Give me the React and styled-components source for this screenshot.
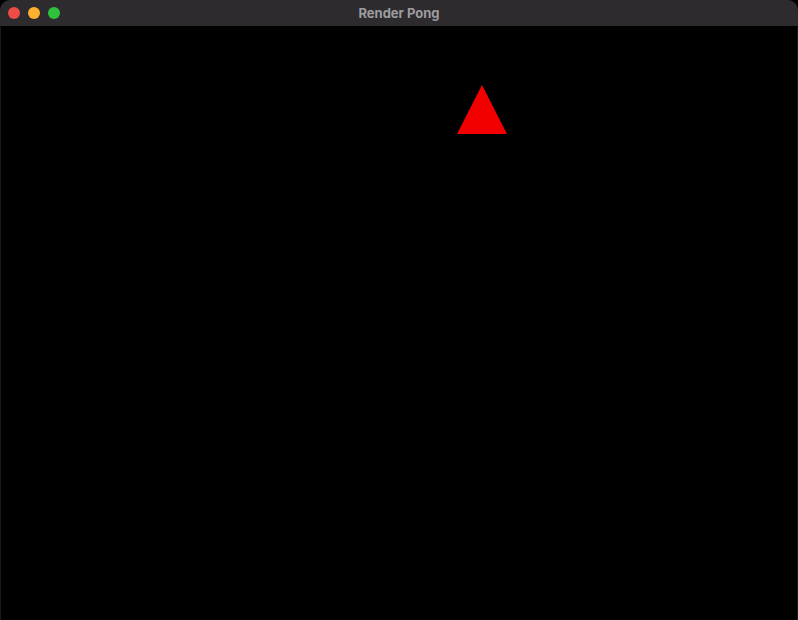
import React from "react";
import styled, { createGlobalStyle } from "styled-components";

const Global = createGlobalStyle`
  html, body {
    margin: 0;
    padding: 0;
    background: #000;
  }
  #root {
    height: 100vh;
  }
`;

const Window = styled.div`
  width: 798px;
  height: 620px;
  display: flex;
  flex-direction: column;
  background: #000;
  border-radius: 10px 10px 0 0;
  overflow: hidden;
  font-family: Inter, "Liberation Sans", sans-serif;
`;

const TitleBar = styled.div`
  position: relative;
  height: 27px;
  flex: none;
  background: #2e2b2f;
  border-bottom: 1px solid #000;
  display: flex;
  align-items: center;
  padding-left: 8px;
  box-sizing: border-box;
`;

const Lights = styled.div`
  display: flex;
  gap: 8px;
`;

const Light = styled.span`
  width: 12px;
  height: 12px;
  border-radius: 50%;
  background: ${(p) => p.color};
`;

const Title = styled.div`
  position: absolute;
  left: 0;
  right: 0;
  top: 0;
  bottom: 0;
  display: flex;
  align-items: center;
  justify-content: center;
  color: #9d9c9f;
  font-size: 13px;
  font-weight: 700;
  pointer-events: none;
`;

const Canvas = styled.div`
  flex: 1;
  background: #000;
  border-left: 1px solid #1a1a1a;
  border-right: 1px solid #1a1a1a;
`;

const Stage = styled.svg`
  display: block;
`;

export default function App() {
  return (
    <>
      <Global />
      <Window>
        <TitleBar>
          <Lights>
            <Light color="#ef4c48" />
            <Light color="#fcb02d" />
            <Light color="#2fc13d" />
          </Lights>
          <Title>Render Pong</Title>
        </TitleBar>
        <Canvas>
          <Stage width="796" height="593" viewBox="0 0 796 593">
            <polygon points="481,58 456,107 506,107" fill="#f20000" />
          </Stage>
        </Canvas>
      </Window>
    </>
  );
}
